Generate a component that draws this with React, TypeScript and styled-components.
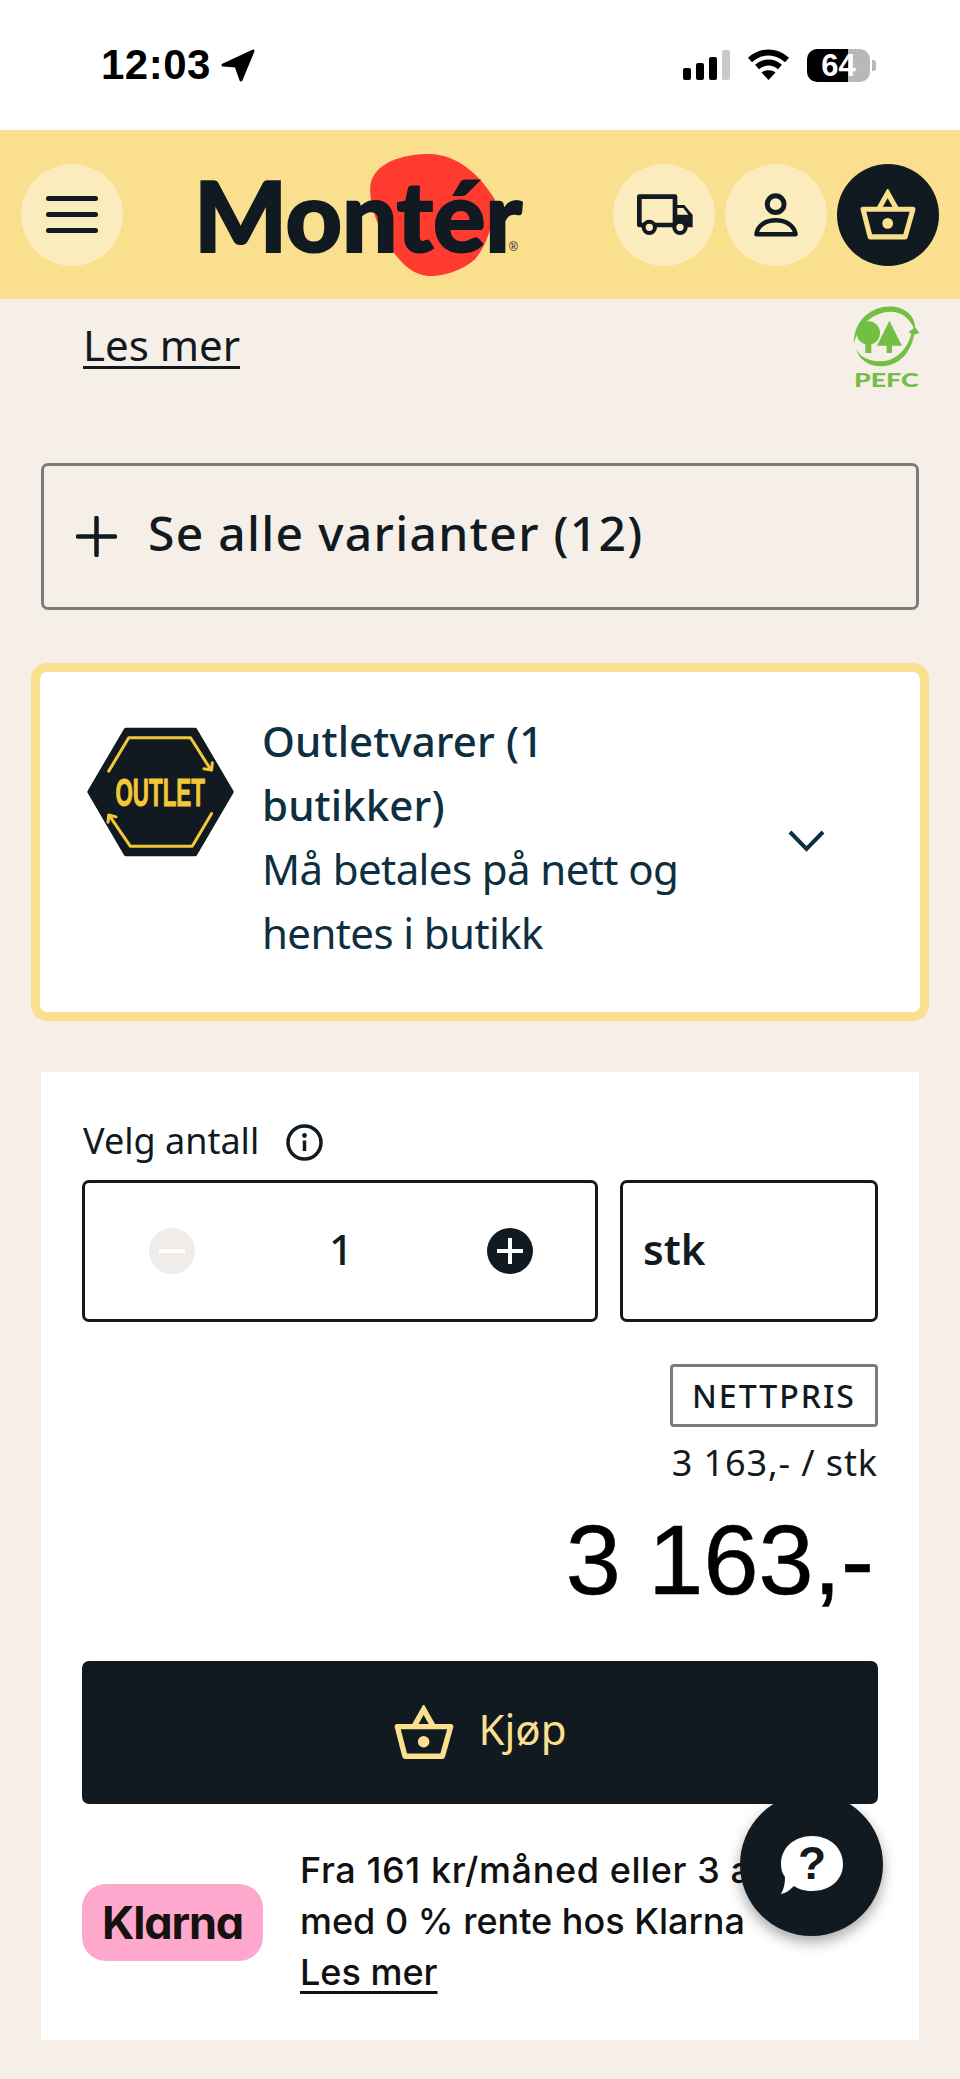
import styled, { createGlobalStyle } from "styled-components";

const INK = "#111a20";
const YELLOW = "#f9df8e";
const PALE = "#faecbd";

const GlobalStyle = createGlobalStyle`
  html, body {
    margin: 0;
    padding: 0;
    background: #f5efe8;
  }
  body {
    font-family: "Noto Sans", Lato, sans-serif;
    color: ${INK};
  }
`;

const Page = styled.div`
  position: relative;
  width: 960px;
  height: 2079px;
  overflow: hidden;
  background: #f5efe8;
`;

// ---------------------------- status bar ----------------------------
const StatusBar = styled.div`
  height: 130px;
  box-sizing: border-box;
  background: #fff;
  padding: 48px 90px 0 101px;
  display: flex;
  justify-content: space-between;
  align-items: flex-start;
`;
const StatusLeft = styled.div`
  display: flex;
  align-items: center;
  gap: 10px;
  height: 34px;
`;
const Clock = styled.span`
  font-family: "Liberation Sans", sans-serif;
  font-weight: 700;
  font-size: 42px;
  letter-spacing: 0.5px;
  line-height: 34px;
  color: #000;
`;
const StatusRight = styled.div`
  display: flex;
  align-items: center;
  gap: 17px;
  height: 34px;
`;
const Signal = styled.div`
  display: flex;
  align-items: flex-end;
  gap: 5px;
  height: 30px;
`;
const SignalBar = styled.div<{ $h: number; $off?: boolean }>`
  width: 8px;
  height: ${(p) => p.$h}px;
  border-radius: 2px;
  background: ${(p) => (p.$off ? "#c9c9c9" : "#000")};
`;
const Battery = styled.div<{ $level: number }>`
  position: relative;
  width: 63px;
  height: 33px;
  border-radius: 10px;
  background: linear-gradient(
    90deg,
    #000 ${(p) => p.$level}%,
    #b8b8b8 ${(p) => p.$level}%
  );
  color: #fff;
  font-family: "Liberation Sans", sans-serif;
  font-weight: 700;
  font-size: 31px;
  line-height: 33px;
  text-align: center;
  &::after {
    content: "";
    position: absolute;
    right: -6px;
    top: 11px;
    width: 4px;
    height: 11px;
    border-radius: 0 3px 3px 0;
    background: #b8b8b8;
  }
`;

// ---------------------------- header ----------------------------
const Header = styled.header`
  height: 169px;
  background: ${YELLOW};
  padding: 0 21px;
  display: flex;
  align-items: center;
`;
const RoundButton = styled.button<{ $dark?: boolean }>`
  width: 102px;
  height: 102px;
  flex: none;
  padding: 0;
  border: 0;
  border-radius: 50%;
  background: ${(p) => (p.$dark ? INK : PALE)};
  display: flex;
  align-items: center;
  justify-content: center;
`;
const MenuLines = styled.div`
  width: 52px;
  display: flex;
  flex-direction: column;
  gap: 10.5px;
  span {
    display: block;
    height: 5.5px;
    border-radius: 3px;
    background: ${INK};
  }
`;
const LogoWrap = styled.div`
  position: relative;
  width: 320px;
  height: 122px;
  margin: 0 auto 0 79px;
`;
const LogoBlob = styled.svg`
  position: absolute;
  left: 168px;
  top: 0;
  width: 125px;
  height: 122px;
`;
const LogoText = styled.span`
  position: absolute;
  left: -8px;
  top: 1px;
  font-family: Lato, sans-serif;
  font-weight: 900;
  font-size: 98px;
  line-height: 118px;
  letter-spacing: -0.2px;
  color: ${INK};
  -webkit-text-stroke: 2px ${INK};
`;
const LogoMark = styled.span`
  position: absolute;
  left: 307px;
  top: 86px;
  font-family: "Liberation Sans", sans-serif;
  font-size: 12px;
  line-height: 14px;
  color: ${INK};
`;
const HeaderActions = styled.div`
  display: flex;
  gap: 10px;
`;

// ---------------------------- content ----------------------------
const IntroRow = styled.div`
  height: 164px;
  box-sizing: border-box;
  padding: 4px 38px 0 83px;
  display: flex;
  justify-content: space-between;
  align-items: flex-start;
`;
const LesMer = styled.a`
  margin-top: 15px;
  font-size: 42px;
  line-height: 54px;
  text-decoration: underline;
  text-underline-offset: 5px;
  text-decoration-thickness: 3px;
  color: ${INK};
`;
const Pefc = styled.svg`
  width: 72px;
  height: 86px;
`;
const VariantButton = styled.div`
  height: 147px;
  box-sizing: border-box;
  margin: 0 41px;
  padding: 0 32px 8px;
  border: 3px solid #7a7d80;
  border-radius: 7px;
  display: flex;
  align-items: center;
  gap: 31px;
  font-size: 48px;
  font-weight: 500;
  letter-spacing: 1.3px;
  color: ${INK};
  svg {
    margin-top: 8px;
  }
`;
const OutletCard = styled.div`
  height: 358px;
  box-sizing: border-box;
  margin: 53px 31px 0;
  padding: 46px 95px 0 47px;
  border: 9px solid ${YELLOW};
  border-radius: 16px;
  background: #fff;
  display: flex;
  align-items: flex-start;
`;
const OutletBadge = styled.svg`
  width: 147px;
  height: 130px;
  flex: none;
  margin-top: 9px;
`;
const OutletText = styled.div`
  width: 440px;
  margin: -9px auto 0 28px;
  font-size: 42px;
  line-height: 64px;
  letter-spacing: -0.6px;
  color: #0e2f40;
`;
const OutletTitle = styled.div`
  font-weight: 500;
  letter-spacing: 0.1px;
`;
const Chevron = styled.svg`
  width: 37px;
  height: 23px;
  margin-top: 111px;
  flex: none;
`;

const Panel = styled.section`
  margin: 51px 41px 0;
  height: 968px;
  box-sizing: border-box;
  padding: 52px 41px 0 41px;
  background: #fff;
`;
const QtyLabelRow = styled.div`
  height: 36px;
  display: flex;
  align-items: center;
  gap: 27px;
  font-size: 36px;
  color: ${INK};
  span {
    margin: -4px 0 0 1px;
  }
`;
const QtyRow = styled.div`
  margin-top: 20px;
  display: flex;
  gap: 22px;
  height: 142px;
`;
const QtyBox = styled.div`
  width: 516px;
  box-sizing: border-box;
  border: 3px solid ${INK};
  border-radius: 7px;
  padding: 0 62px 0 64px;
  display: flex;
  align-items: center;
  justify-content: space-between;
`;
const QtyValue = styled.span`
  font-size: 42px;
  font-weight: 500;
  color: ${INK};
  margin-top: -6px;
`;
const UnitBox = styled.div`
  flex: 1;
  box-sizing: border-box;
  border: 3px solid ${INK};
  border-radius: 7px;
  padding: 0 20px 6px;
  display: flex;
  align-items: center;
  font-size: 42px;
  font-weight: 600;
  color: ${INK};
`;
const PriceBlock = styled.div`
  display: flex;
  flex-direction: column;
  align-items: flex-end;
  margin-top: 42px;
`;
const NetBadge = styled.div`
  width: 208px;
  height: 63px;
  box-sizing: border-box;
  border: 3px solid #7a7d80;
  border-radius: 4px;
  display: flex;
  align-items: center;
  justify-content: center;
  font-size: 32px;
  font-weight: 500;
  letter-spacing: 2px;
  color: ${INK};
`;
const UnitPrice = styled.div`
  margin-top: 11px;
  font-size: 36px;
  line-height: 50px;
  letter-spacing: 0.9px;
  color: ${INK};
`;
const TotalPrice = styled.div`
  margin-top: 17px;
  margin-right: 4px;
  font-family: "Liberation Sans", sans-serif;
  font-size: 99px;
  line-height: 110px;
  color: #000;
  -webkit-text-stroke: 0.6px #000;
`;
const BuyButton = styled.button`
  margin-top: 46px;
  width: 796px;
  height: 143px;
  border: 0;
  border-radius: 7px;
  background: ${INK};
  color: ${YELLOW};
  display: flex;
  align-items: center;
  justify-content: center;
  gap: 23px;
  font-family: "Noto Sans", sans-serif;
  font-size: 42px;
  span {
    margin-top: -9px;
  }
`;
const KlarnaRow = styled.div`
  margin-top: 41px;
  display: flex;
  align-items: center;
  gap: 37px;
`;
const KlarnaLogo = styled.div`
  width: 181px;
  height: 77px;
  flex: none;
  margin-top: 2px;
  border-radius: 24px;
  background: #ffa8cd;
  display: flex;
  align-items: center;
  justify-content: center;
  font-family: Inter, sans-serif;
  font-weight: 700;
  font-size: 45px;
  letter-spacing: -1.2px;
  font-feature-settings: "cv11" 1;
  color: #17120f;
`;
const KlarnaText = styled.div`
  font-family: Inter, sans-serif;
  font-weight: 500;
  font-size: 36px;
  line-height: 51px;
  white-space: nowrap;
  color: #111;
  a {
    color: #111;
    text-decoration: underline;
    text-underline-offset: 6px;
    text-decoration-thickness: 3px;
  }
`;
const KlarnaLead = styled.span`
  letter-spacing: 0.6px;
`;
const HelpFab = styled.button`
  position: absolute;
  left: 740px;
  top: 1793px;
  width: 143px;
  height: 143px;
  padding: 0;
  border: 0;
  border-radius: 50%;
  background: ${INK};
  box-shadow: 0 6px 14px rgba(0, 0, 0, 0.35);
  display: flex;
  align-items: center;
  justify-content: center;
`;

const BasketIcon = ({ width, color }: { width: number; color: string }) => (
  <svg width={width} viewBox="780 120 172 152" fill="none">
    <path d="M838 180 L865 132 L892 180" stroke={color} strokeWidth="15" strokeLinejoin="miter" />
    <path d="M792 180 H940 L917 262 H813 Z" stroke={color} strokeWidth="15" strokeLinejoin="round" />
    <circle cx="865" cy="222" r="16" fill={color} />
  </svg>
);

const App = () => {
  return (
    <Page>
      <GlobalStyle />
      <StatusBar>
        <StatusLeft>
          <Clock>12:03</Clock>
          <svg width="34" height="33" viewBox="0 0 34 33">
            <path d="M32 2 L2 16 L15 17 L20 31 Z" fill="#000" stroke="#000" strokeWidth="3" strokeLinejoin="round" />
          </svg>
        </StatusLeft>
        <StatusRight>
          <Signal>
            <SignalBar $h={12} />
            <SignalBar $h={17} />
            <SignalBar $h={23} />
            <SignalBar $h={30} $off />
          </Signal>
          <svg width="43" height="32" viewBox="0 0 43 32" fill="none" stroke="#000" strokeWidth="6">
            <path d="M3 11 C14 1 29 1 40 11" />
            <path d="M10 18 C17 12 26 12 33 18" />
            <path d="M21.5 31 L14.5 23.5 C18 20.5 25 20.5 28.5 23.5 Z" fill="#000" stroke="none" />
          </svg>
          <Battery $level={65}>64</Battery>
        </StatusRight>
      </StatusBar>

      <Header>
        <RoundButton>
          <MenuLines>
            <span />
            <span />
            <span />
          </MenuLines>
        </RoundButton>
        <LogoWrap>
          <LogoBlob viewBox="570 68 375 367">
            <path
              d="M570 170 C572 110 640 70 740 68 C830 66 900 130 945 205 C945 260 925 340 885 385 C845 420 790 435 745 435 C690 430 650 385 620 330 C595 285 568 230 570 170 Z"
              fill="#ff3b30"
            />
          </LogoBlob>
          <LogoText>Montér</LogoText>
          <LogoMark>®</LogoMark>
        </LogoWrap>
        <HeaderActions>
          <RoundButton>
            <svg width="57" height="41" viewBox="105 135 171 123" fill="none">
              <path d="M115 228 V143 H222 V228 Z" stroke={INK} strokeWidth="14" strokeLinejoin="round" />
              <path d="M222 168 H250 L275 198 V235 H222 Z" fill={INK} />
              <path d="M229 177 H247 L262 197 H229 Z" fill={PALE} />
              <circle cx="145" cy="235" r="17" fill={PALE} stroke={INK} strokeWidth="12" />
              <circle cx="237" cy="235" r="17" fill={PALE} stroke={INK} strokeWidth="12" />
            </svg>
          </RoundButton>
          <RoundButton>
            <svg width="44" height="44" viewBox="465 134 126 126" fill="none">
              <circle cx="527" cy="166" r="24" stroke={INK} strokeWidth="14" />
              <path d="M472 252 C475 226 500 212 527 212 C555 212 580 226 584 252 Z" stroke={INK} strokeWidth="13" strokeLinejoin="round" />
            </svg>
          </RoundButton>
          <RoundButton $dark>
            <BasketIcon width={58} color={YELLOW} />
          </RoundButton>
        </HeaderActions>
      </Header>

      <IntroRow>
        <LesMer>Les mer</LesMer>
        <Pefc viewBox="60 40 216 258">
          <path d="M255 125 C262 75 215 42 160 52 C105 62 68 110 72 165 C78 120 115 78 165 68 C205 60 240 80 255 125 Z" fill="#72bf44" />
          <path d="M78 180 C92 218 130 235 170 228 C215 220 245 180 252 135 L268 130 L255 112 L236 128 L244 132 C232 178 200 210 160 214 C125 218 95 205 78 180 Z" fill="#72bf44" />
          <circle cx="115" cy="130" r="35" fill="#72bf44" />
          <rect x="106" y="150" width="18" height="40" fill="#72bf44" />
          <path d="M178 93 L216 168 H141 Z" fill="#72bf44" />
          <rect x="170" y="160" width="16" height="30" fill="#72bf44" />
          <text x="72" y="291" fontFamily="Lato, sans-serif" fontWeight="900" fontSize="56" fill="#72bf44" textLength="194" lengthAdjust="spacingAndGlyphs">
            PEFC
          </text>
        </Pefc>
      </IntroRow>

      <VariantButton>
        <svg width="41" height="41" viewBox="0 0 41 41" stroke={INK} strokeWidth="4.5" strokeLinecap="round">
          <path d="M20.5 2 V39 M2 20.5 H39" />
        </svg>
        <span>Se alle varianter (12)</span>
      </VariantButton>

      <OutletCard>
        <OutletBadge viewBox="55 55 440 385">
          <path d="M172 62 H378 L487 247 L378 433 H172 L63 247 Z" fill={INK} stroke={INK} strokeWidth="14" strokeLinejoin="round" />
          <g fill="none" stroke="#f2c838" strokeWidth="9" strokeLinecap="round" strokeLinejoin="round">
            <path d="M120 185 L180 85 H365 L425 180 M405 178 L428 182 L430 160" />
            <path d="M428 312 L370 410 H185 L122 318 M118 338 L120 316 L142 322" />
          </g>
          <text x="140" y="290" fontFamily="'Liberation Sans', sans-serif" fontWeight="700" fontSize="118" fill="#f2c838" textLength="268" lengthAdjust="spacingAndGlyphs" stroke="#f2c838" strokeWidth="3">
            OUTLET
          </text>
        </OutletBadge>
        <OutletText>
          <OutletTitle>Outletvarer (1 butikker)</OutletTitle>
          <div>Må betales på nett og hentes i butikk</div>
        </OutletText>
        <Chevron viewBox="0 0 37 23" fill="none" stroke="#0e2f40" strokeWidth="4">
          <path d="M2 3 L18.5 20 L35 3" />
        </Chevron>
      </OutletCard>

      <Panel>
        <QtyLabelRow>
          <span>Velg antall</span>
          <svg width="37" height="37" viewBox="0 0 37 37" fill="none">
            <circle cx="18.5" cy="18.5" r="16.5" stroke={INK} strokeWidth="3.5" />
            <circle cx="18.5" cy="11.5" r="2.4" fill={INK} />
            <path d="M18.5 16.5 V27" stroke={INK} strokeWidth="3.5" />
          </svg>
        </QtyLabelRow>
        <QtyRow>
          <QtyBox>
            <svg width="46" height="46" viewBox="0 0 46 46">
              <circle cx="23" cy="23" r="23" fill="#efecea" />
              <path d="M10 23 H36" stroke="#fff" strokeWidth="4" />
            </svg>
            <QtyValue>1</QtyValue>
            <svg width="46" height="46" viewBox="0 0 46 46">
              <circle cx="23" cy="23" r="23" fill={INK} />
              <path d="M10 23 H36 M23 10 V36" stroke="#fff" strokeWidth="4" />
            </svg>
          </QtyBox>
          <UnitBox>stk</UnitBox>
        </QtyRow>
        <PriceBlock>
          <NetBadge>NETTPRIS</NetBadge>
          <UnitPrice>3 163,- / stk</UnitPrice>
          <TotalPrice>3 163,-</TotalPrice>
        </PriceBlock>
        <BuyButton>
          <BasketIcon width={62} color={YELLOW} />
          <span>Kjøp</span>
        </BuyButton>
        <KlarnaRow>
          <KlarnaLogo>Klarna</KlarnaLogo>
          <KlarnaText>
            <KlarnaLead>Fra 161 kr/måned eller 3 avdrag</KlarnaLead>
            <br />
            med 0 % rente hos Klarna
            <br />
            <a>Les mer</a>
          </KlarnaText>
        </KlarnaRow>
      </Panel>

      <HelpFab>
        <svg width="64" height="60" viewBox="0 0 64 60">
          <path d="M32 1 C50 1 63 13 63 29 C63 45 50 56 32 56 C25 56 18 54 14 51 C10 55 6 58 1 59 C4 54 5 48 5 42 C2 38 1 34 1 29 C1 13 14 1 32 1 Z" fill="#fff" />
          <text x="32" y="44" textAnchor="middle" fontFamily="'Liberation Sans', sans-serif" fontWeight="700" fontSize="46" fill={INK}>
            ?
          </text>
        </svg>
      </HelpFab>
    </Page>
  );
};

export default App;
